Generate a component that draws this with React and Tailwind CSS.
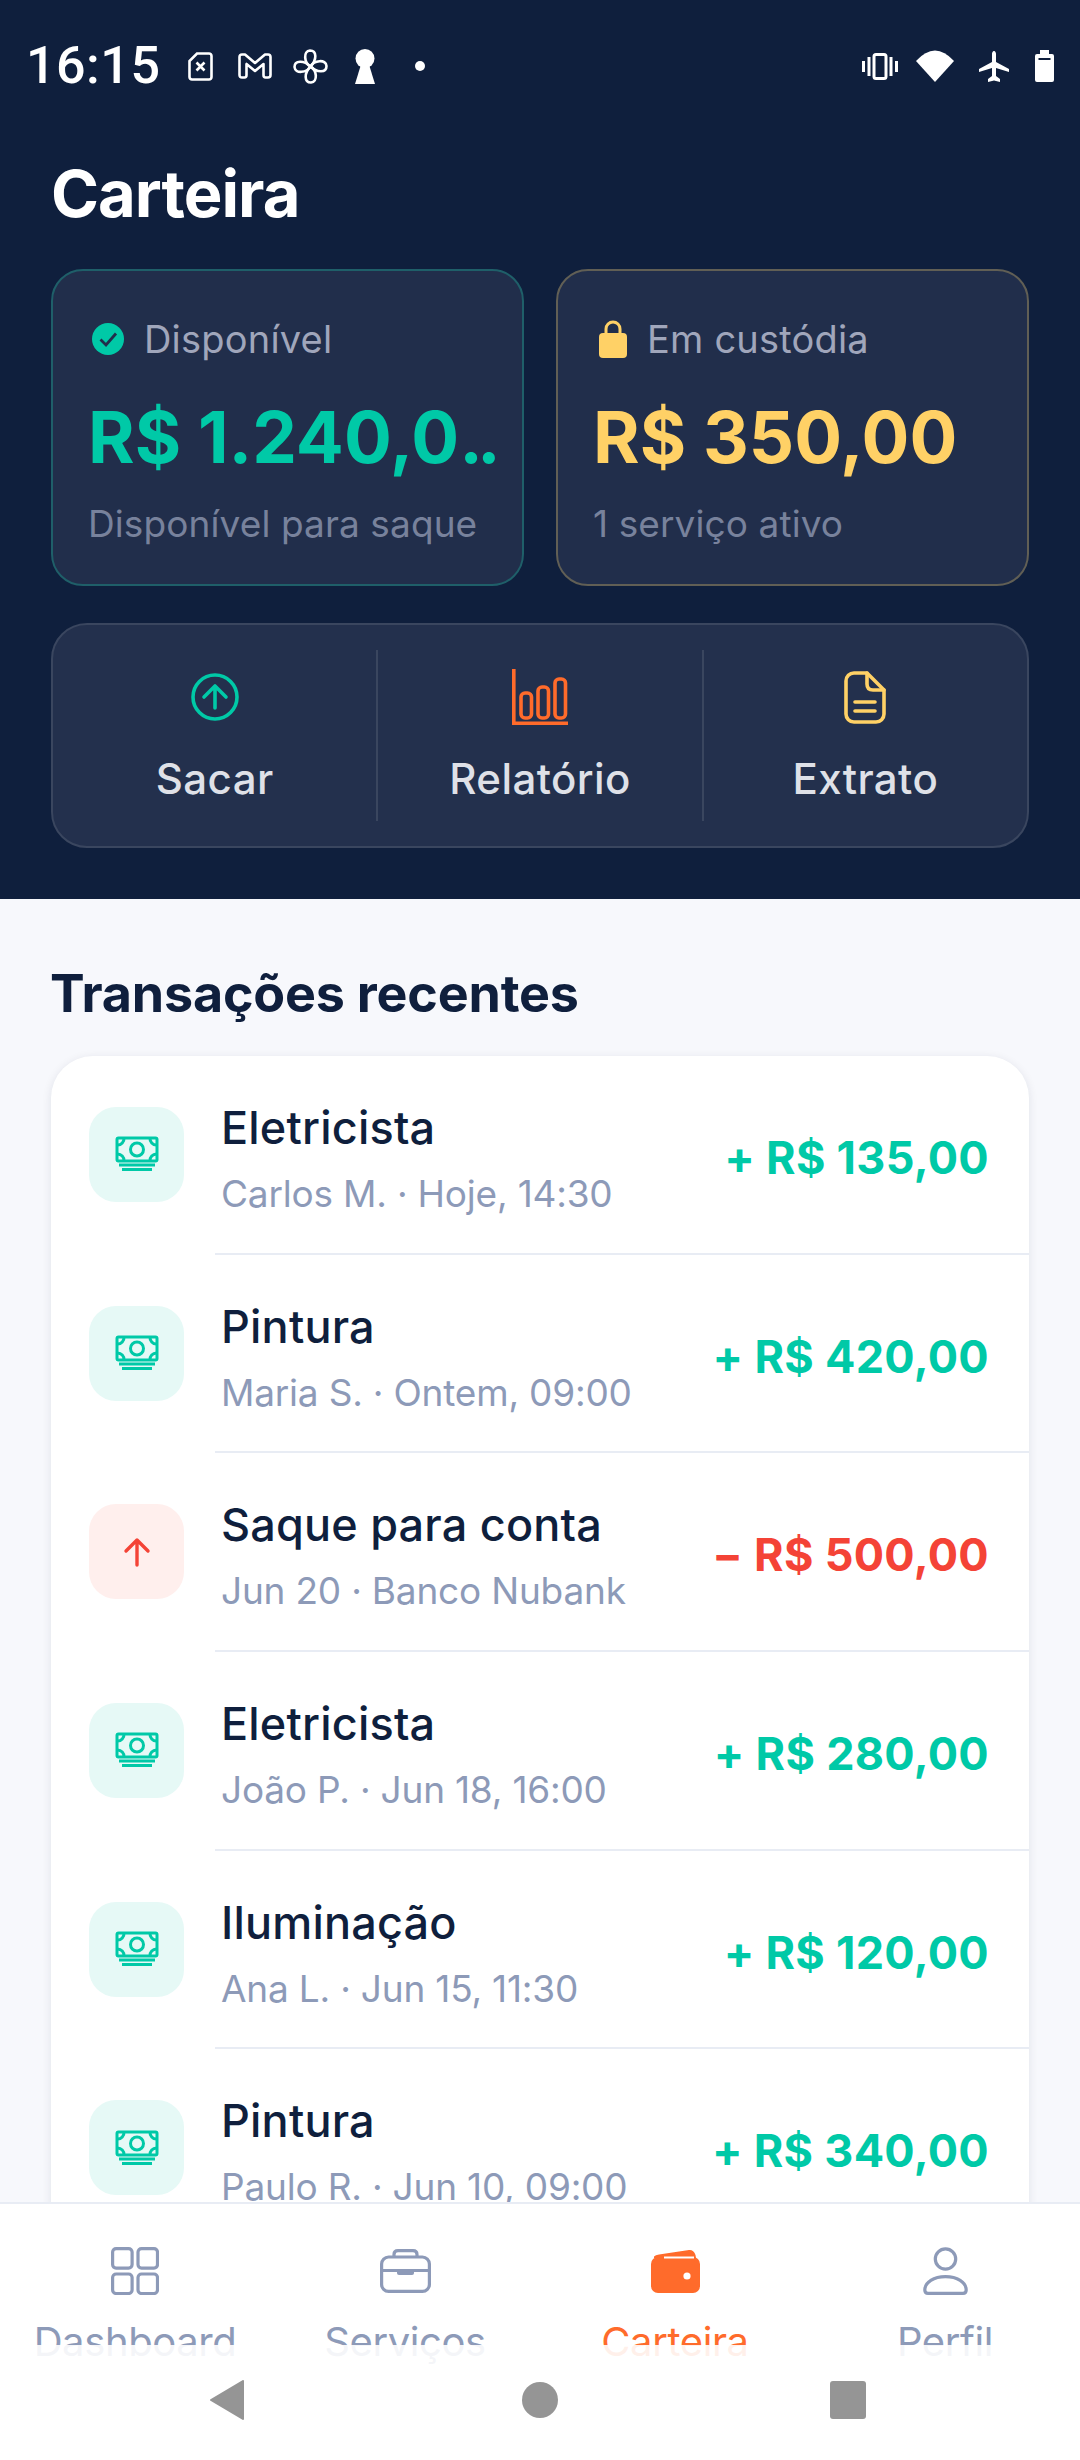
// App.jsx
const font = { fontFamily: 'Inter, "Noto Sans", sans-serif' };

const rows = [
  { title: 'Eletricista', sub: 'Carlos M. · Hoje, 14:30', amount: '+ R$ 135,00' },
  { title: 'Pintura', sub: 'Maria S. · Ontem, 09:00', amount: '+ R$ 420,00' },
  { title: 'Saque para conta', sub: 'Jun 20 · Banco Nubank', amount: '− R$ 500,00', out: true },
  { title: 'Eletricista', sub: 'João P. · Jun 18, 16:00', amount: '+ R$ 280,00' },
  { title: 'Iluminação', sub: 'Ana L. · Jun 15, 11:30', amount: '+ R$ 120,00' },
  { title: 'Pintura', sub: 'Paulo R. · Jun 10, 09:00', amount: '+ R$ 340,00' },
];

function StatusBar() {
  return (
    <div className="flex items-center h-[132px] pl-[26px] pr-[26px] text-white">
      <span className="w-[162px] text-[52px] font-medium leading-none tracking-[0.5px]" style={{ fontFamily: 'Roboto, sans-serif' }}>
        16:15
      </span>
      <svg width="25" height="29" viewBox="0 0 25 29" fill="none" stroke="white" strokeWidth="2.6">
        <path d="M9 1.5H21a2.5 2.5 0 0 1 2.5 2.5V25a2.5 2.5 0 0 1-2.5 2.5H4A2.5 2.5 0 0 1 1.5 25V9z" />
        <path d="M8.5 10.5l8 8M16.5 10.5l-8 8" />
      </svg>
      <svg className="ml-[25px]" width="34" height="26" viewBox="0 0 34 26" fill="none" stroke="white" strokeWidth="2.6" strokeLinejoin="round">
        <path d="M1.5 4Q1.5 1.5 4 1.5H7L17 10L27 1.5H30Q32.5 1.5 32.5 4V22Q32.5 24.5 30 24.5H27.5Q25.5 24.5 25.5 22V11L17 18L8.5 11V22Q8.5 24.5 6.5 24.5H4Q1.5 24.5 1.5 22z" />
      </svg>
      <svg className="ml-[21px]" width="35" height="35" viewBox="0 0 35 35" fill="none" stroke="white" strokeWidth="2.6" strokeLinejoin="round">
        <path d="M17.5 17.5C11 14 10 2 17 1.5C24 1.5 24 11 17.5 17.5z" />
        <path d="M17.5 17.5C21 11 33 10 33.5 17C33.5 24 24 24 17.5 17.5z" />
        <path d="M17.5 17.5C24 21 25 33 18 33.5C11 33.5 11 24 17.5 17.5z" />
        <path d="M17.5 17.5C14 24 2 25 1.5 18C1.5 11 11 11 17.5 17.5z" />
      </svg>
      <svg className="ml-[27px]" width="20" height="35" viewBox="0 0 20 35" fill="white">
        <circle cx="10" cy="9.5" r="9.5" />
        <path d="M6.5 14L0 35H20L13.5 14z" />
      </svg>
      <span className="ml-[40px] w-[10px] h-[10px] rounded-full bg-white" />
      <div className="ml-auto flex items-center">
        <svg width="36" height="27" viewBox="0 0 36 27" fill="white">
          <rect x="12" y="1.5" width="12" height="24" rx="2" fill="none" stroke="white" strokeWidth="3" />
          <rect x="0" y="8" width="3" height="11" />
          <rect x="5.5" y="4" width="3" height="19" />
          <rect x="27.5" y="4" width="3" height="19" />
          <rect x="33" y="8" width="3" height="11" />
        </svg>
        <svg className="ml-[18px]" width="38" height="32" viewBox="0 0 38 32" fill="white">
          <path d="M0 11Q19 -10 38 11L19 32z" />
        </svg>
        <svg className="ml-[25px]" width="30" height="31" viewBox="0 0 30 31" fill="white">
          <path d="M15 0C16.5 0 17 2 17 3V11L30 18V21L17 17V25L21 28V31L15 29.5L9 31V28L13 25V17L0 21V18L13 11V3C13 2 13.5 0 15 0z" />
        </svg>
        <svg className="ml-[26px]" width="19" height="32" viewBox="0 0 19 32">
          <path fill="white" d="M5 0H14V4H17a2 2 0 0 1 2 2V30a2 2 0 0 1-2 2H2a2 2 0 0 1-2-2V6a2 2 0 0 1 2-2H5z" />
          <rect x="3.5" y="8" width="12" height="2" fill="#0f1f3d" />
        </svg>
      </div>
    </div>
  );
}

function BalanceCard({ border, icon, label, amount, amountColor, sub, labelGap }) {
  return (
    <div className={`flex-1 h-[317px] rounded-[32px] border-2 bg-[#212e4b] pl-[35px] pr-[6px] ${border}`}>
      <div className={`flex items-center h-[48px] mt-[44px] ${labelGap}`}>
        {icon}
        <span className="text-[38px] leading-none tracking-[0.2px] text-[#a0a6bb]">{label}</span>
      </div>
      <div className={`mt-[36px] text-[71px] font-bold leading-[76px] whitespace-nowrap ${amountColor}`}>{amount}</div>
      <div className="mt-[27px] text-[37px] leading-[44px] tracking-[0.1px] text-[#78829c] whitespace-nowrap">{sub}</div>
    </div>
  );
}

function ActionItem({ icon, label, boxed }) {
  return (
    <div className={`flex-1 h-[171px] flex flex-col items-center ${boxed ? 'border-l-2 border-[#3a465f]' : ''}`}>
      <div className="h-[62px] mt-[16px] flex items-center justify-center">{icon}</div>
      <div className="mt-[28px] text-[42px] font-medium leading-[46px] tracking-[0.4px] text-[#dfe1e8]">{label}</div>
    </div>
  );
}

function MoneyIcon() {
  return (
    <svg width="44" height="36" viewBox="0 0 44 36" fill="none" stroke="#00c9a7" strokeWidth="3">
      <rect x="2" y="2" width="40" height="23" rx="1.5" />
      <circle cx="22" cy="13.5" r="6.5" />
      <path d="M2.5 9a6.5 6.5 0 0 0 6.5-7M35 2a6.5 6.5 0 0 0 6.5 7M2.5 18a6.5 6.5 0 0 1 6.5 7M35 25a6.5 6.5 0 0 1 6.5-7" />
      <path d="M4 29H40M7 33.5H37" />
    </svg>
  );
}

function ArrowOutIcon() {
  return (
    <svg width="32" height="32" viewBox="0 0 32 32" fill="none" stroke="#f44336" strokeWidth="3.4" strokeLinecap="round" strokeLinejoin="round">
      <path d="M16 29V4M5 15L16 4L27 15" />
    </svg>
  );
}

function Row({ row, last }) {
  return (
    <>
      <div className="flex items-center h-[196.7px] pl-[38px] pr-[40px]">
        <div className={`w-[95px] h-[95px] rounded-[27px] flex items-center justify-center shrink-0 ${row.out ? 'bg-[#ffefed]' : 'bg-[#e6f9f6]'}`}>
          {row.out ? <ArrowOutIcon /> : <MoneyIcon />}
        </div>
        <div className="ml-[37px] min-w-0 pt-[10px]">
          <div className="text-[45px] font-medium leading-[52px] tracking-[0.2px] text-[#0f1f3d] whitespace-nowrap">{row.title}</div>
          <div className="mt-[17px] text-[37px] leading-[46px] tracking-[-0.2px] text-[#8d9ab8] whitespace-nowrap">{row.sub}</div>
        </div>
        <div className={`ml-auto pt-[6px] text-[45px] font-bold leading-none tracking-[0.3px] whitespace-nowrap ${row.out ? 'text-[#f44336]' : 'text-[#00c9a7]'}`}>
          {row.amount}
        </div>
      </div>
      {!last && <div className="h-[2px] ml-[164px] bg-[#e8ecf4]" />}
    </>
  );
}

function TabItem({ icon, label, active }) {
  return (
    <div className="flex flex-col items-center">
      <div className="h-[50px] mt-[42px] flex items-center justify-center">{icon}</div>
      <div className={`mt-[23px] text-[40px] leading-[46px] tracking-[-0.4px] ${active ? 'text-[#ff6b2b]' : 'text-[#8d9ab8]'}`}>{label}</div>
    </div>
  );
}

function TabBar() {
  const gray = '#8d9ab8';
  return (
    <div className="relative h-[258px] bg-white border-t-2 border-[#e8ecf4]">
      <div className="grid grid-cols-4">
        <TabItem
          label="Dashboard"
          icon={
            <svg width="48" height="48" viewBox="0 0 48 48" fill="none" stroke={gray} strokeWidth="3.2">
              <rect x="1.6" y="1.6" width="19.5" height="19.5" rx="3.5" />
              <rect x="27" y="1.6" width="19.5" height="19.5" rx="3.5" />
              <rect x="1.6" y="27" width="19.5" height="19.5" rx="3.5" />
              <rect x="27" y="27" width="19.5" height="19.5" rx="3.5" />
            </svg>
          }
        />
        <TabItem
          label="Serviços"
          icon={
            <svg width="51" height="44" viewBox="0 0 51 44" fill="none" stroke={gray} strokeWidth="3.2">
              <rect x="1.6" y="8" width="47.8" height="34.4" rx="7" />
              <path d="M14 8V5.5Q14 1.6 18 1.6H33Q37 1.6 37 5.5V8" />
              <path d="M1.6 21.5H49.4" />
              <rect x="17" y="21" width="17" height="5" rx="2" fill={gray} stroke="none" />
            </svg>
          }
        />
        <TabItem
          active
          label="Carteira"
          icon={
            <svg width="49" height="44" viewBox="0 0 49 44">
              <path fill="#ff6b2b" d="M3 7.5Q4.5 6 8 5.5L38 1Q42.5 0.5 44.5 6L45 9H3z" />
              <rect x="0" y="8" width="49" height="36" rx="7" fill="#ff6b2b" />
              <path d="M13 8.5H43" stroke="white" strokeWidth="2" />
              <circle cx="36" cy="27" r="3.6" fill="white" />
            </svg>
          }
        />
        <TabItem
          label="Perfil"
          icon={
            <svg width="45" height="48" viewBox="0 0 45 48" fill="none" stroke={gray} strokeWidth="3.2">
              <circle cx="22.5" cy="12" r="10.2" />
              <path d="M1.8 43C1.8 35 11 29.6 22.5 29.6C34 29.6 43.2 35 43.2 43Q43.2 46.4 40 46.4H5Q1.8 46.4 1.8 43z" />
            </svg>
          }
        />
      </div>
      <div className="absolute inset-x-0 top-[141px] bottom-0 bg-white/90 pl-[210px] pt-[35px]">
        <div className="flex items-center h-[40px]">
          <svg width="34" height="40" viewBox="0 0 34 40" fill="#959595" stroke="#959595" strokeWidth="2" strokeLinejoin="round">
            <path d="M33 1V39L1 20z" />
          </svg>
          <span className="ml-[278px] w-[36px] h-[36px] rounded-full bg-[#959595]" />
          <span className="ml-[272px] w-[36px] h-[38px] rounded-[3px] bg-[#959595]" />
        </div>
      </div>
    </div>
  );
}

export default function App() {
  return (
    <div className="w-[1080px] h-[2460px] flex flex-col overflow-hidden bg-[#f7f8fc]" style={font}>
      <div className="h-[899px] shrink-0 bg-[#0f1f3d]">
        <StatusBar />
        <h1 className="pl-[51px] mt-[26px] text-[65px] font-bold leading-[72px] tracking-[-1px] text-white">Carteira</h1>
        <div className="flex gap-[32px] mx-[51px] mt-[39px]">
          <BalanceCard
            border="border-[#1f5f69]"
            label="Disponível"
            labelGap="gap-[20px] pl-[4px]"
            amount={<>R$ 1.240,0<span className="tracking-[-6px]">..</span></>}
            amountColor="text-[#00c9a7]"
            sub="Disponível para saque"
            icon={
              <svg width="32" height="32" viewBox="0 0 32 32">
                <circle cx="16" cy="16" r="16" fill="#00c9a7" />
                <path d="M8.5 16.5L14 22L24 10.5" fill="none" stroke="#212e4b" strokeWidth="2.8" />
              </svg>
            }
          />
          <BalanceCard
            border="border-[#615f55]"
            label="Em custódia"
            labelGap="gap-[20px] pl-[6px]"
            amount="R$ 350,00"
            amountColor="text-[#ffd166]"
            sub="1 serviço ativo"
            icon={
              <svg width="28" height="38" viewBox="0 0 28 38">
                <path d="M7 15V9a7 7 0 0 1 14 0V15" fill="none" stroke="#ffd166" strokeWidth="3" />
                <rect x="0" y="13" width="28" height="25" rx="4" fill="#ffd166" />
              </svg>
            }
          />
        </div>
        <div className="flex items-center mx-[51px] mt-[37px] h-[225px] rounded-[36px] border-2 border-[#3a465f] bg-[#23304d]">
          <ActionItem
            label="Sacar"
            icon={
              <svg width="48" height="48" viewBox="0 0 48 48" fill="none" stroke="#00c9a7" strokeWidth="3.6" strokeLinecap="round" strokeLinejoin="round">
                <circle cx="24" cy="24" r="22" />
                <path d="M24 35V13M13 24L24 13L35 24" />
              </svg>
            }
          />
          <ActionItem
            boxed
            label="Relatório"
            icon={
              <svg width="56" height="56" viewBox="0 0 56 56" fill="none" stroke="#ff6b2b" strokeWidth="3.6">
                <path d="M1.8 0V54.2H56" />
                <rect x="9" y="24" width="10.5" height="25" rx="4" />
                <rect x="26" y="18" width="10.5" height="31" rx="4" />
                <rect x="43" y="10" width="10.5" height="39" rx="4" />
              </svg>
            }
          />
          <ActionItem
            boxed
            label="Extrato"
            icon={
              <svg width="42" height="53" viewBox="0 0 42 53" fill="none" stroke="#ffd166" strokeWidth="3.6" strokeLinecap="round" strokeLinejoin="round">
                <path d="M10 2H23L40 19V43a8 8 0 0 1-8 8H10a8 8 0 0 1-8-8V10a8 8 0 0 1 8-8z" />
                <path d="M23 2V13q0 6 6 6H40" />
                <path d="M11 31H31M11 40H31" />
              </svg>
            }
          />
        </div>
      </div>

      <div className="flex-1 min-h-0 overflow-hidden px-[51px] pt-[65px]">
        <h2 className="-ml-[1px] text-[52px] font-bold leading-[60px] tracking-[-0.2px] text-[#0f1f3d]">Transações recentes</h2>
        <div className="mt-[32px] rounded-[42px] bg-white shadow-[0_2px_10px_rgba(15,31,61,0.1)]">
          {rows.map((row, i) => (
            <Row key={i} row={row} last={i === rows.length - 1} />
          ))}
        </div>
      </div>

      <TabBar />
    </div>
  );
}
